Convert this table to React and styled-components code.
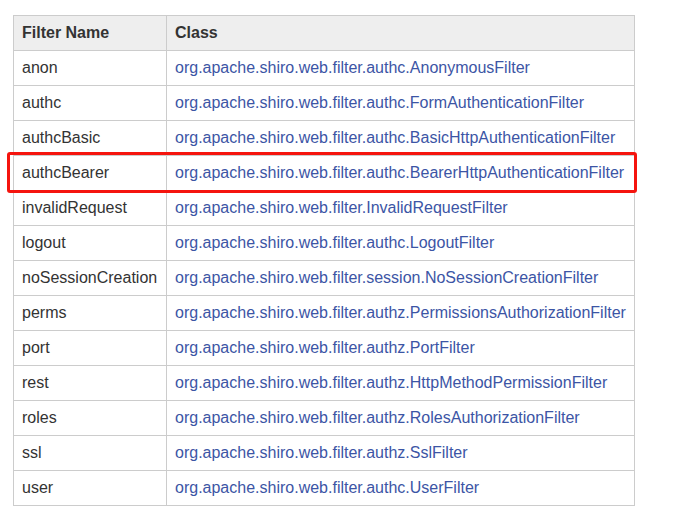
import React from "react";
import styled, { createGlobalStyle } from "styled-components";

const Global = createGlobalStyle`
  html, body { margin: 0; padding: 0; background: #fff; }
  body { font-family: "Liberation Sans", Arial, sans-serif; }
`;

const Page = styled.div`
  padding: 15px 0 0 13px;
`;

const Table = styled.div`
  box-sizing: border-box;
  width: 622px;
  border: 1px solid #ccc;
  border-bottom: none;
  font-size: 16px;
  line-height: 18px;
`;

const Row = styled.div`
  display: grid;
  grid-template-columns: 152px 1fr;
  border-bottom: 1px solid #ccc;
  background: ${(p) => (p.$head ? "#eee" : "#fff")};
  position: relative;
  ${(p) =>
    p.$mark &&
    `
    z-index: 1;
    &::after {
      content: "";
      position: absolute;
      left: -7px;
      top: -4px;
      right: -3px;
      bottom: -3px;
      border: 3px solid #f5140e;
      border-radius: 3px;
      pointer-events: none;
    }
  `}
`;

const Cell = styled.div`
  padding: 8px 8px;
  height: 34px;
  box-sizing: border-box;
  white-space: nowrap;
  color: ${(p) => (p.$link ? "#3c55a5" : "#333")};
  font-weight: ${(p) => (p.$head ? 700 : 400)};
  & + & {
    border-left: 1px solid #ccc;
  }
`;

const rows = [
  ["anon", "org.apache.shiro.web.filter.authc.AnonymousFilter"],
  ["authc", "org.apache.shiro.web.filter.authc.FormAuthenticationFilter"],
  ["authcBasic", "org.apache.shiro.web.filter.authc.BasicHttpAuthenticationFilter"],
  ["authcBearer", "org.apache.shiro.web.filter.authc.BearerHttpAuthenticationFilter"],
  ["invalidRequest", "org.apache.shiro.web.filter.InvalidRequestFilter"],
  ["logout", "org.apache.shiro.web.filter.authc.LogoutFilter"],
  ["noSessionCreation", "org.apache.shiro.web.filter.session.NoSessionCreationFilter"],
  ["perms", "org.apache.shiro.web.filter.authz.PermissionsAuthorizationFilter"],
  ["port", "org.apache.shiro.web.filter.authz.PortFilter"],
  ["rest", "org.apache.shiro.web.filter.authz.HttpMethodPermissionFilter"],
  ["roles", "org.apache.shiro.web.filter.authz.RolesAuthorizationFilter"],
  ["ssl", "org.apache.shiro.web.filter.authz.SslFilter"],
  ["user", "org.apache.shiro.web.filter.authc.UserFilter"],
];

export default function App() {
  return (
    <>
      <Global />
      <Page>
        <Table>
          <Row $head>
            <Cell $head>Filter Name</Cell>
            <Cell $head>Class</Cell>
          </Row>
          {rows.map(([name, cls]) => (
            <Row key={name} $mark={name === "authcBearer"}>
              <Cell>{name}</Cell>
              <Cell $link>{cls}</Cell>
            </Row>
          ))}
        </Table>
      </Page>
    </>
  );
}
